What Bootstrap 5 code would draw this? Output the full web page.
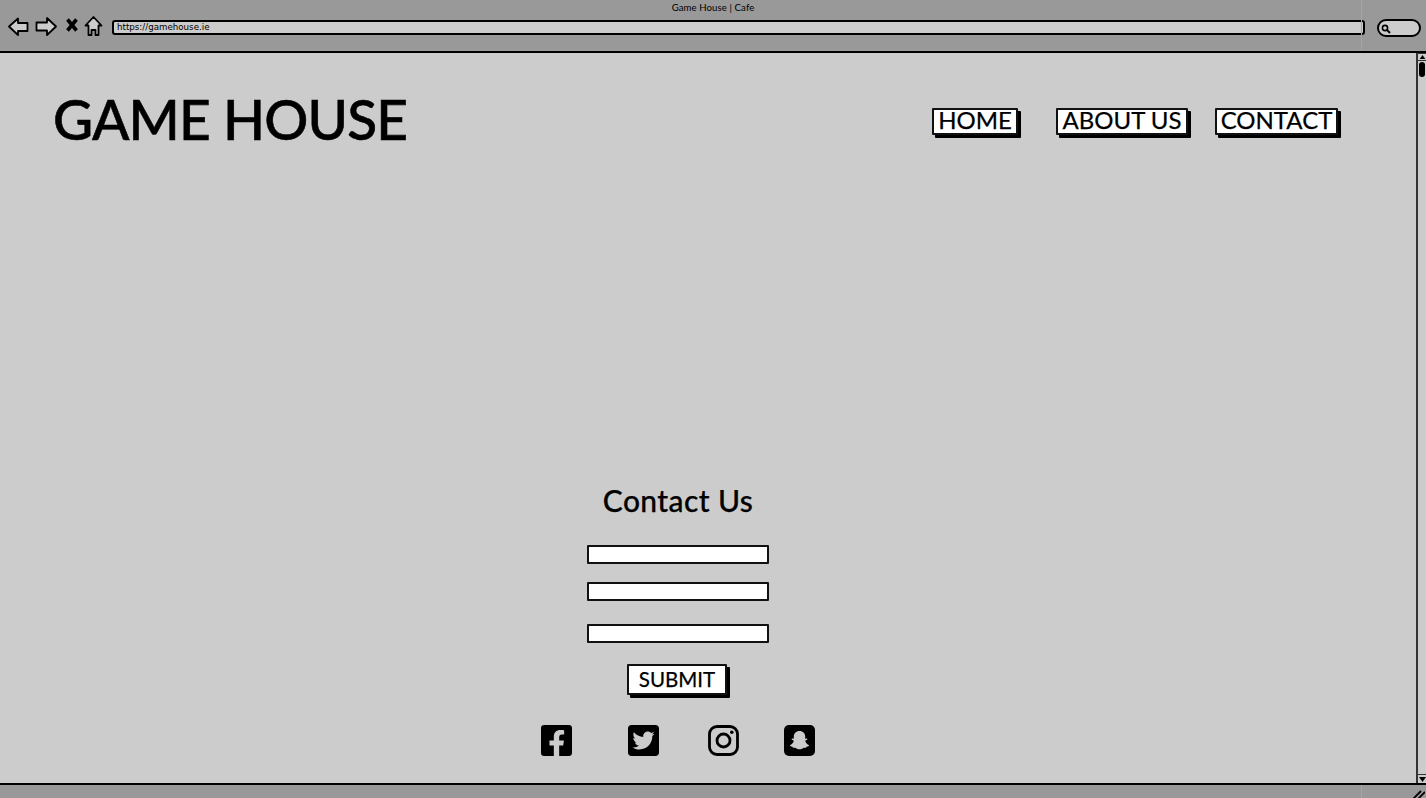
<!DOCTYPE html>
<html lang="en">
<head>
<meta charset="utf-8">
<title>Game House | Cafe</title>
<link href="https://cdn.jsdelivr.net/npm/bootstrap@5.3.0/dist/css/bootstrap.min.css" rel="stylesheet">
<style>
html,body{height:798px;overflow:hidden}
body{background:#999;font-family:Lato,"Liberation Sans",sans-serif;color:#000}
.shell{height:798px}
.chrome-top{height:53px;background:#999;border-bottom:2px solid #000;flex:none;position:relative}
.chrome-top::after,.chrome-bottom::after{content:"";position:absolute;left:1361px;top:0;bottom:0;width:1px;background:#a6a6a6}
.win-title{font-size:9.6px;line-height:10px;padding-top:3px;text-align:center;height:13px;letter-spacing:.1px}
.tool-row{height:24px;padding-left:8px;padding-right:5px}
.tool-icons{width:104px;flex:none}
.url-bar{height:15px;flex:1;background:#ccc;border:2px solid #000;border-radius:3px;font-family:"DejaVu Sans",sans-serif;font-size:8.7px;line-height:11px;padding-left:3px;margin-right:12px;margin-top:7px}
.search-pill{width:44px;height:18px;border:2px solid #000;border-radius:10px;background:#ccc;flex:none;margin-top:6px;padding:3px 2px}
.page-body{flex:1;min-height:0}
.canvas{flex:1;background:#ccc;min-width:0}
.scroll-rail{width:10px;flex:none;background:#ccc;border-left:2px solid #333;display:flex;flex-direction:column;justify-content:space-between}
.rail-btn-up{height:8px;border-top:1px solid #333;border-bottom:1px solid #333;display:flex;align-items:center;justify-content:center;margin-bottom:1px}
.rail-thumb{width:6px;height:15px;background:#000;border-radius:3px;margin-left:1px}
.rail-btn-down{height:9px;border-top:1px solid #333;display:flex;align-items:center;justify-content:center}
.chrome-bottom{height:15px;background:#999;border-top:2px solid #000;flex:none;padding-right:1px;position:relative}
.site-head{padding:34px 78px 0 53px;height:115px}
.brand-title{font-size:55px;font-weight:500;line-height:64px;letter-spacing:-.85px;margin:0;white-space:nowrap;-webkit-text-stroke:.6px #000}
.site-links{padding-top:21px}
.sk-btn{background:#fff;border:2px solid #111;border-radius:1px;box-shadow:3px 3px 0 #000;color:#000;font-size:24px;line-height:20px;padding:0 0 3px;text-align:center;-webkit-text-stroke:.25px #000}
.sk-btn:hover{background:#fff;color:#000;border-color:#111}
.btn-home{width:86px;margin-right:38px}
.btn-about{width:132px;margin-right:27px}
.btn-contact{width:123px}
.contact-wrap{width:1356px;margin-top:314px}
.contact-title{font-size:30px;font-weight:500;line-height:36px;margin:0 0 27px;letter-spacing:.4px;-webkit-text-stroke:.25px #000}
.sk-input{width:182px;height:19px;background:#fff;border:2px solid #111;border-radius:1px;padding:0;display:block;min-height:0}
.gap-a{margin-bottom:18px}
.gap-b{margin-bottom:23px}
.gap-c{margin-bottom:21px}
.sk-submit{width:100px;height:31px;font-size:20.5px;line-height:24px;padding:0 0 2px;margin-right:2px}
.social{height:31px;margin-top:30px;width:274px}
.social svg{width:31px;height:31px;display:block}
.gap-fb{margin-right:56px}
.gap-tw{margin-right:49px}
.gap-ig{margin-right:45px}
.grip{display:block;margin-left:auto;margin-top:5px}
</style>
</head>
<body>
<div class="shell d-flex flex-column">
  <header class="chrome-top">
    <div class="win-title">Game House | Cafe</div>
    <div class="tool-row d-flex align-items-start">
      <div class="tool-icons">
        <svg width="100" height="24" viewBox="0 0 100 24" fill="none" stroke="#000" stroke-width="1.800" stroke-linejoin="round">
          <path d="M1 11.500 L10 3.500 V8 H19.500 V16 H10 V20 Z" fill="#ccc"/>
          <path d="M48 11.500 L39 3 V7.500 H28.500 V15.500 H39 V20 Z" fill="#ccc"/>
          <path d="M59.500 4.500 L68.500 15.500 M68.500 4.500 L59.500 15.500" stroke-width="3.600"/>
          <path d="M85.500 2 L93.500 10.500 H90.500 V20 H87.500 V15 H83.500 V20 H80.500 V10.500 H77.500 Z" fill="#ccc"/>
        </svg>
      </div>
      <div class="url-bar">https://gamehouse.ie</div>
      <div class="search-pill d-flex">
        <svg width="10" height="10" viewBox="0 0 10 10" fill="none" stroke="#000"><circle cx="4" cy="4" r="2.600" stroke-width="1.600"/><path d="M6 6 L9 9" stroke-width="2"/></svg>
      </div>
    </div>
  </header>
  <div class="page-body d-flex">
    <main class="canvas">
      <div class="site-head d-flex justify-content-between align-items-start">
        <h1 class="brand-title">GAME HOUSE</h1>
        <nav class="site-links d-flex">
          <a class="btn sk-btn btn-home" href="#">HOME</a>
          <a class="btn sk-btn btn-about" href="#">ABOUT US</a>
          <a class="btn sk-btn btn-contact" href="#">CONTACT</a>
        </nav>
      </div>
      <section class="contact-wrap d-flex flex-column align-items-center">
        <h2 class="contact-title">Contact Us</h2>
        <form class="d-flex flex-column align-items-center">
          <input class="form-control sk-input gap-a" type="text" aria-label="Name">
          <input class="form-control sk-input gap-b" type="email" aria-label="Email">
          <input class="form-control sk-input gap-c" type="text" aria-label="Message">
          <button class="btn sk-btn sk-submit" type="button">SUBMIT</button>
        </form>
        <div class="social d-flex">
          <svg class="gap-fb" viewBox="0 32 448 448" aria-label="Facebook"><path d="M400 32H48A48 48 0 0 0 0 80v352a48 48 0 0 0 48 48h137.25V327.69h-63V256h63v-54.64c0-62.15 37-96.48 93.67-96.48 27.14 0 55.52 4.84 55.52 4.84v61h-31.27c-30.81 0-40.42 19.12-40.42 38.73V256h68.78l-11 71.69h-57.78V480H400a48 48 0 0 0 48-48V80a48 48 0 0 0-48-48z"/></svg>
          <svg class="gap-tw" viewBox="0 32 448 448" aria-label="Twitter"><path d="M400 32H48C21.5 32 0 53.5 0 80v352c0 26.5 21.5 48 48 48h352c26.5 0 48-21.5 48-48V80c0-26.5-21.500-48-48-48zm-48.900 158.800c.2 2.800.2 5.700.2 8.500 0 86.700-66 186.600-186.600 186.600-37.200 0-71.700-10.800-100.700-29.400 5.300.6 10.400.8 15.800.8 30.700 0 58.900-10.400 81.400-28-28.800-.6-53-19.500-61.300-45.500 10.100 1.500 19.200 1.500 29.600-1.200-30-6.100-52.500-32.500-52.500-64.400v-.8c8.700 4.900 18.900 7.900 29.600 8.300a65.447 65.447 0 0 1-29.200-54.600c0-12.200 3.200-23.400 8.900-33.100 32.300 39.800 80.800 65.800 135.200 68.600-9.300-44.500 24-80.600 64-80.600 18.900 0 35.900 7.900 47.900 20.700 14.800-2.800 29-8.300 41.600-15.800-4.900 15.200-15.100 28-28.700 36.100 13.200-1.400 26-5.100 37.800-10.200-8.900 13.100-20.100 24.700-32.900 34z"/></svg>
          <svg class="gap-ig" viewBox="0 0 31 31" fill="none" stroke="#000" aria-label="Instagram"><rect x="1.500" y="1.500" width="28" height="28" rx="7.500" stroke-width="2.800"/><circle cx="15.500" cy="15.500" r="6.500" stroke-width="2.800"/><circle cx="23.800" cy="7.200" r="1.800" fill="#000" stroke="none"/></svg>
          <svg viewBox="0 0 31 31" aria-label="Snapchat"><rect width="31" height="31" rx="5"/><path fill="#ccc" d="M15.500 6c3.600 0 5.700 2.500 5.700 5.500 0 .8 0 1.500-.1 2.100.6.200 1.300-.3 1.800-.1.600.2.700.9.100 1.300-.6.400-1.700.7-1.800 1.300.3 1.400 1.800 3.200 3.400 3.800.6.200.6.8.1 1.100-.6.400-1.500.5-2.200.7-.3.400-.2 1-.6 1.100-.8.100-1.700-.2-2.500.1-1 .4-1.900 1.400-3.900 1.400s-2.900-1-3.900-1.400c-.8-.3-1.700 0-2.500-.1-.4-.1-.3-.7-.6-1.100-.7-.2-1.600-.3-2.200-.7-.5-.3-.5-.9.100-1.100 1.600-.6 3.100-2.400 3.400-3.800-.1-.6-1.200-.9-1.800-1.300-.6-.4-.5-1.100.1-1.300.5-.2 1.200.3 1.800.1-.1-.6-.1-1.300-.1-2.100C9.800 8.500 11.900 6 15.500 6z"/></svg>
        </div>
      </section>
    </main>
    <aside class="scroll-rail">
      <div>
        <div class="rail-btn-up"><svg width="7" height="4" viewBox="0 0 7 5"><path d="M3.500 0 L7 5 H0 Z"/></svg></div>
        <div class="rail-thumb"></div>
      </div>
      <div class="rail-btn-down"><svg width="7" height="5" viewBox="0 0 7 5"><path d="M3.500 5 L7 0 H0 Z"/></svg></div>
    </aside>
  </div>
  <footer class="chrome-bottom">
    <svg class="grip" width="12" height="9" viewBox="0 0 12 9" fill="none" stroke="#000" stroke-width="1.800"><path d="M0 9 L8 1 M5 9 L12 2"/></svg>
  </footer>
</div>
</body>
</html>
